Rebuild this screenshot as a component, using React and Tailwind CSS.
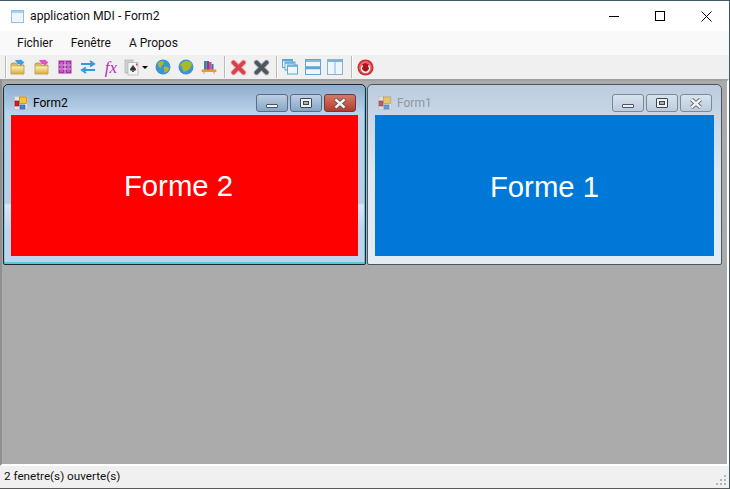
const font = { fontFamily: 'Roboto, "Noto Sans", sans-serif' }

function AppIcon() {
  return (
    <svg width="13" height="13" viewBox="0 0 13 13">
      <rect x="0.5" y="0.5" width="12" height="12" fill="#eef5fc" stroke="#8fc0ec" />
      <rect x="1" y="1" width="11" height="2" fill="#a9d0f2" />
    </svg>
  )
}

function FormIcon({ faded }) {
  return (
    <svg width="14" height="14" viewBox="0 0 14 14" className={faded ? 'opacity-70' : ''}>
      <rect x="0.5" y="0.5" width="13" height="13" fill="#e4e4e4" stroke="#bdbdbd" strokeWidth="0.6" />
      <rect x="1" y="5" width="4" height="5" fill="#c8242b" stroke="#7c1216" strokeWidth="0.6" />
      <rect x="5.5" y="1" width="7" height="6.5" fill="#f5c531" stroke="#a67d10" strokeWidth="0.6" />
      <rect x="6" y="9" width="5" height="4" fill="#3f86d8" stroke="#1f5ba5" strokeWidth="0.6" />
    </svg>
  )
}

function Folder({ arrow, id }) {
  return (
    <svg width="16" height="16" viewBox="0 0 16 16">
      <defs>
        <linearGradient id={id} x1="0" y1="0" x2="0" y2="1">
          <stop offset="0" stopColor="#fff0b8" />
          <stop offset="1" stopColor="#d9ad3e" />
        </linearGradient>
      </defs>
      <path d="M1 5 L1 15 L14 15 L14 6 L7 6 L6 4 L2 4 Z" fill="#d8bb62" stroke="#a98c42" strokeWidth="0.7" />
      <rect x="1.5" y="7.5" width="12" height="7" fill={`url(#${id})`} />
      <path d="M5 1 L10 1 L10 0 L14.5 3.5 L10 7 L10 5 L7.5 5 Z" fill={arrow} />
    </svg>
  )
}

function Grid() {
  return (
    <svg width="14" height="14" viewBox="0 0 14 14">
      <rect x="0.5" y="0.5" width="13" height="13" fill="#a531a8" />
      <path d="M7 1 V13 M1 5 H13 M1 9 H13" stroke="#e7c0e8" strokeWidth="1" />
      <path d="M2 3 H5 M9 3 H12 M2 7 H5 M9 7 H12 M2 11 H5 M9 11 H12" stroke="#d78bd9" strokeWidth="1" />
    </svg>
  )
}

function Swap() {
  return (
    <svg width="16" height="14" viewBox="0 0 16 14">
      <path d="M1 4 H12 M10 1 L14 4 L10 6.5" fill="none" stroke="#2f9be4" strokeWidth="2" />
      <path d="M15 10 H4 M6 7.5 L2 10 L6 13" fill="none" stroke="#2f9be4" strokeWidth="2" />
    </svg>
  )
}

function Cards() {
  return (
    <svg width="16" height="17" viewBox="0 0 16 17">
      <rect x="1" y="1" width="8" height="13" fill="#cfd3d6" stroke="#a2a8ac" strokeWidth="0.6" />
      <rect x="4" y="3.5" width="10" height="12.5" fill="#f4f4f4" stroke="#a2a8ac" strokeWidth="0.6" />
      <path d="M9 6 C10 8 12 9 12 10.5 C12 12 10 12 9.5 11 L10 13 L8 13 L8.5 11 C8 12 6 12 6 10.5 C6 9 8 8 9 6 Z" fill="#33383c" />
      <rect x="12" y="4.5" width="1.5" height="2" fill="#d0443c" />
    </svg>
  )
}

function Globe({ tilt }) {
  return (
    <svg width="16" height="16" viewBox="0 0 16 16">
      <circle cx="8" cy="8" r="7.5" fill="#3d93d3" />
      {tilt ? (
        <path d="M2 6 C5 1 12 1 14 5 C13 9 10 12 6 13 C4 11 5 8 2 6 Z" fill="#a8b92c" />
      ) : (
        <path d="M3 4 C5 2 8 2 9 3 C9 6 6 6 6 9 C4 9 3 7 3 4 Z M9 8 C11 7 14 8 14 10 C13 13 10 14 9 13 C10 11 8 10 9 8 Z" fill="#a8b92c" />
      )}
    </svg>
  )
}

function Books() {
  return (
    <svg width="16" height="16" viewBox="0 0 16 16">
      <rect x="3" y="2" width="2.5" height="9" fill="#2d8c8a" />
      <rect x="5.5" y="2" width="2.5" height="9" fill="#7d3fa6" />
      <rect x="8" y="3" width="2.5" height="8" fill="#d04f7c" />
      <rect x="10.5" y="5" width="2" height="6" fill="#3c6fc0" />
      <path d="M1 11 H15 V12.5 H1 Z M3 12.5 V15 M13 12.5 V15" fill="#f0962c" stroke="#f0962c" />
    </svg>
  )
}

function BigX({ color, edge }) {
  return (
    <svg width="17" height="17" viewBox="0 0 17 17">
      <path d="M3.5 3.5 L13.5 13.5 M13.5 3.5 L3.5 13.5" stroke={edge} strokeWidth="5.4" strokeLinecap="round" />
      <path d="M3.5 3.5 L13.5 13.5 M13.5 3.5 L3.5 13.5" stroke={color} strokeWidth="3.8" strokeLinecap="round" />
    </svg>
  )
}

function Cascade() {
  return (
    <svg width="16" height="16" viewBox="0 0 16 16">
      <g fill="#eef6fb" stroke="#5ea6d6">
        <rect x="0.5" y="0.5" width="10" height="8" />
        <rect x="3" y="3" width="10" height="8" />
        <rect x="5.5" y="6" width="10" height="9" />
      </g>
      <path d="M1 1.5 H10 M3.5 4 H12.5 M6 7 H15" stroke="#5ea6d6" strokeWidth="1.5" />
    </svg>
  )
}

function Rows() {
  return (
    <svg width="16" height="16" viewBox="0 0 16 16">
      <rect x="0.5" y="0.5" width="15" height="15" fill="#eef6fb" stroke="#5ea6d6" />
      <path d="M1 2 H15 M1 8 H15 M1 9.5 H15" stroke="#5ea6d6" strokeWidth="1.6" />
    </svg>
  )
}

function Cols() {
  return (
    <svg width="16" height="16" viewBox="0 0 16 16">
      <rect x="0.5" y="0.5" width="15" height="15" fill="#eef6fb" stroke="#7fb4d8" />
      <path d="M1 2 H15" stroke="#7fb4d8" strokeWidth="2" />
      <path d="M8 1 V15" stroke="#7fb4d8" />
    </svg>
  )
}

function Power() {
  return (
    <svg width="17" height="17" viewBox="0 0 17 17">
      <circle cx="8.5" cy="8.5" r="8" fill="#cf2a30" />
      <circle cx="8.5" cy="8.5" r="6.4" fill="#e8666a" />
      <circle cx="8.5" cy="9" r="4.6" fill="#a81219" />
      <path d="M5.6 6.5 A4 4 0 1 0 11.4 6.5" fill="none" stroke="#fff" strokeWidth="1.5" />
      <path d="M8.5 4.5 V7.5" stroke="#b8141b" strokeWidth="3" />
    </svg>
  )
}

function Sep({ ml }) {
  return <div className={`w-px h-[22px] bg-[#b9b9b9] border-r border-white box-content ${ml}`} />
}

function Tool({ w, children }) {
  return <div className={`flex items-center justify-center h-[24px] ${w}`}>{children}</div>
}

function CaptionButton({ kind, active, danger }) {
  const bg = danger
    ? 'bg-gradient-to-b from-[#d2786a] to-[#b5392b] border-[#6e3a3a]'
    : active
      ? 'bg-gradient-to-b from-[#bccfe4] to-[#86a6c8] border-[#5d6b7c]'
      : 'bg-gradient-to-b from-[#d8e3ef] to-[#bccbdd] border-[#7b8896]'
  return (
    <div className={`w-[32px] h-[18px] rounded-[3px] border flex items-center justify-center ${bg}`}>
      {kind === 'min' && <div className="w-[12px] h-[4px] mt-[5px] bg-[#eef0f2] border border-[#4d5560] rounded-[1px]" />}
      {kind === 'max' && (
        <div className="w-[12px] h-[10px] bg-[#eef0f2] border border-[#3f4650] rounded-[1px] flex items-center justify-center">
          <div className="w-[6px] h-[4px] bg-[#9fb2c6] border border-[#3f4650]" />
        </div>
      )}
      {kind === 'close' && (
        <svg width="16" height="11" viewBox="0 0 16 11">
          <path d="M3.5 1.5 L12.5 9.5 M12.5 1.5 L3.5 9.5" stroke="#4a5058" strokeWidth="4" />
          <path d="M3.5 1.5 L12.5 9.5 M12.5 1.5 L3.5 9.5" stroke="#f3f3f3" strokeWidth="2.4" />
        </svg>
      )}
    </div>
  )
}

function ChildWindow({ title, label, color, active, width, textPad }) {
  return (
    <div
      className={`h-[181px] rounded-t-[5px] rounded-b-[2px] border flex flex-col ${width} ${
        active
          ? 'border-[#1c2733] bg-[linear-gradient(to_bottom,#8fadcd_0%,#bcd3ea_16%,#b7cfe6_66%,#dbe7f3_67%,#bcd6ec_80%,#b9d6ec_100%)] shadow-[inset_0_-2px_0_#53c8e0,inset_-1px_0_0_#53c8e0,inset_1px_0_0_#8ac9e6]'
          : 'border-[#4e5560] bg-gradient-to-b from-[#bccde0] via-[#dfe8f2] to-[#e3ebf5]'
      }`}
    >
      <div className="h-[30px] flex items-center pl-[10px] pr-[9px] pt-[6px] shrink-0">
        <FormIcon faded={!active} />
        <span className={`ml-[5px] text-[12px] ${active ? 'text-black' : 'text-[#8e979f]'}`}>{title}</span>
        <div className="ml-auto flex gap-[2px]">
          <CaptionButton kind="min" active={active} />
          <CaptionButton kind="max" active={active} />
          <CaptionButton kind="close" active={active} danger={active} />
        </div>
      </div>
      <div
        className={`mx-[7px] h-[141px] flex items-center justify-center text-white text-[29.33px] ${color} ${textPad}`}
        style={{ fontFamily: '"Liberation Sans", sans-serif' }}
      >
        {label}
      </div>
    </div>
  )
}

export default function App() {
  return (
    <div className="w-[730px] h-[489px] flex flex-col overflow-hidden bg-white text-[12px] text-black border-t border-r border-[#3f5a66]" style={font}>
      <div className="h-[30px] flex items-center shrink-0 bg-white pl-[11px]">
        <AppIcon />
        <span className="ml-[6px] text-[12.2px] text-[#111]">application MDI - Form2</span>
        <div className="ml-auto flex h-full">
          <div className="w-[46px] flex items-center justify-center">
            <div className="w-[10px] h-px bg-black" />
          </div>
          <div className="w-[46px] flex items-center justify-center">
            <div className="w-[10px] h-[10px] border border-black" />
          </div>
          <div className="w-[46px] flex items-center justify-center">
            <svg width="11" height="11" viewBox="0 0 11 11">
              <path d="M0.5 0.5 L10.5 10.5 M10.5 0.5 L0.5 10.5" stroke="#000" />
            </svg>
          </div>
        </div>
      </div>

      <div className="h-[24px] flex items-center shrink-0 bg-[#f9f9f9] pl-[17px] gap-[18px] text-[12px] text-[#111]">
        <span>Fichier</span>
        <span>Fenêtre</span>
        <span>A Propos</span>
      </div>

      <div className="h-[24px] flex items-center shrink-0 bg-[#f0f0f0] pl-[5px]">
        <Sep />
        <Tool w="w-[22px]"><Folder arrow="#3e9ee0" id="folder-blue" /></Tool>
        <Tool w="w-[25px]"><Folder arrow="#e052c8" id="folder-pink" /></Tool>
        <Tool w="w-[22px]"><Grid /></Tool>
        <Tool w="w-[24px]"><Swap /></Tool>
        <Tool w="w-[22px]">
          <span className="text-[17px] italic text-[#b030b0] leading-none" style={{ fontFamily: '"Liberation Serif", serif' }}>fx</span>
        </Tool>
        <Tool w="w-[28px]">
          <Cards />
          <div className="ml-[2px] w-0 h-0 border-x-[3px] border-x-transparent border-t-[3px] border-t-black" />
        </Tool>
        <Tool w="w-[26px]"><Globe /></Tool>
        <Tool w="w-[20px]"><Globe tilt /></Tool>
        <Tool w="w-[26px]"><Books /></Tool>
        <Sep ml="ml-[2px]" />
        <Tool w="w-[24px]"><BigX color="#d8434b" edge="#e9a5a8" /></Tool>
        <Tool w="w-[22px]"><BigX color="#4c565e" edge="#a5abb0" /></Tool>
        <Sep ml="ml-[4px]" />
        <Tool w="w-[24px]"><Cascade /></Tool>
        <Tool w="w-[22px]"><Rows /></Tool>
        <Tool w="w-[22px]"><Cols /></Tool>
        <Sep ml="ml-[5px]" />
        <Tool w="w-[24px]"><Power /></Tool>
      </div>

      <div className="h-[387px] shrink-0 bg-[#ababab] border-2 border-t-[#a0a0a0] border-l-[#8f8f8f] border-r-white border-b-white pt-[3px] pl-px flex items-start gap-[1px]">
        <ChildWindow title="Form2" label="Forme 2" color="bg-[#ff0000]" active width="w-[363px]" textPad="pr-[12px]" />
        <ChildWindow title="Form1" label="Forme 1" color="bg-[#0078d7]" width="w-[355px]" textPad="pt-[2px]" />
      </div>

      <div className="h-[22px] shrink-0 bg-[#f0f0f0] flex items-center pl-[4px] text-[11.7px] text-[#111] relative">
        <span>2 fenetre(s) ouverte(s)</span>
        <div className="absolute right-[3px] bottom-[3px] grid grid-cols-3 gap-[2px]">
          {[0, 0, 1, 0, 1, 1, 1, 1, 1].map((on, i) => (
            <div key={i} className={`w-[2px] h-[2px] ${on ? 'bg-[#b5b5b5]' : ''}`} />
          ))}
        </div>
      </div>
      <div className="h-[1px] bg-[#5a5a5a] shrink-0" />
    </div>
  )
}
